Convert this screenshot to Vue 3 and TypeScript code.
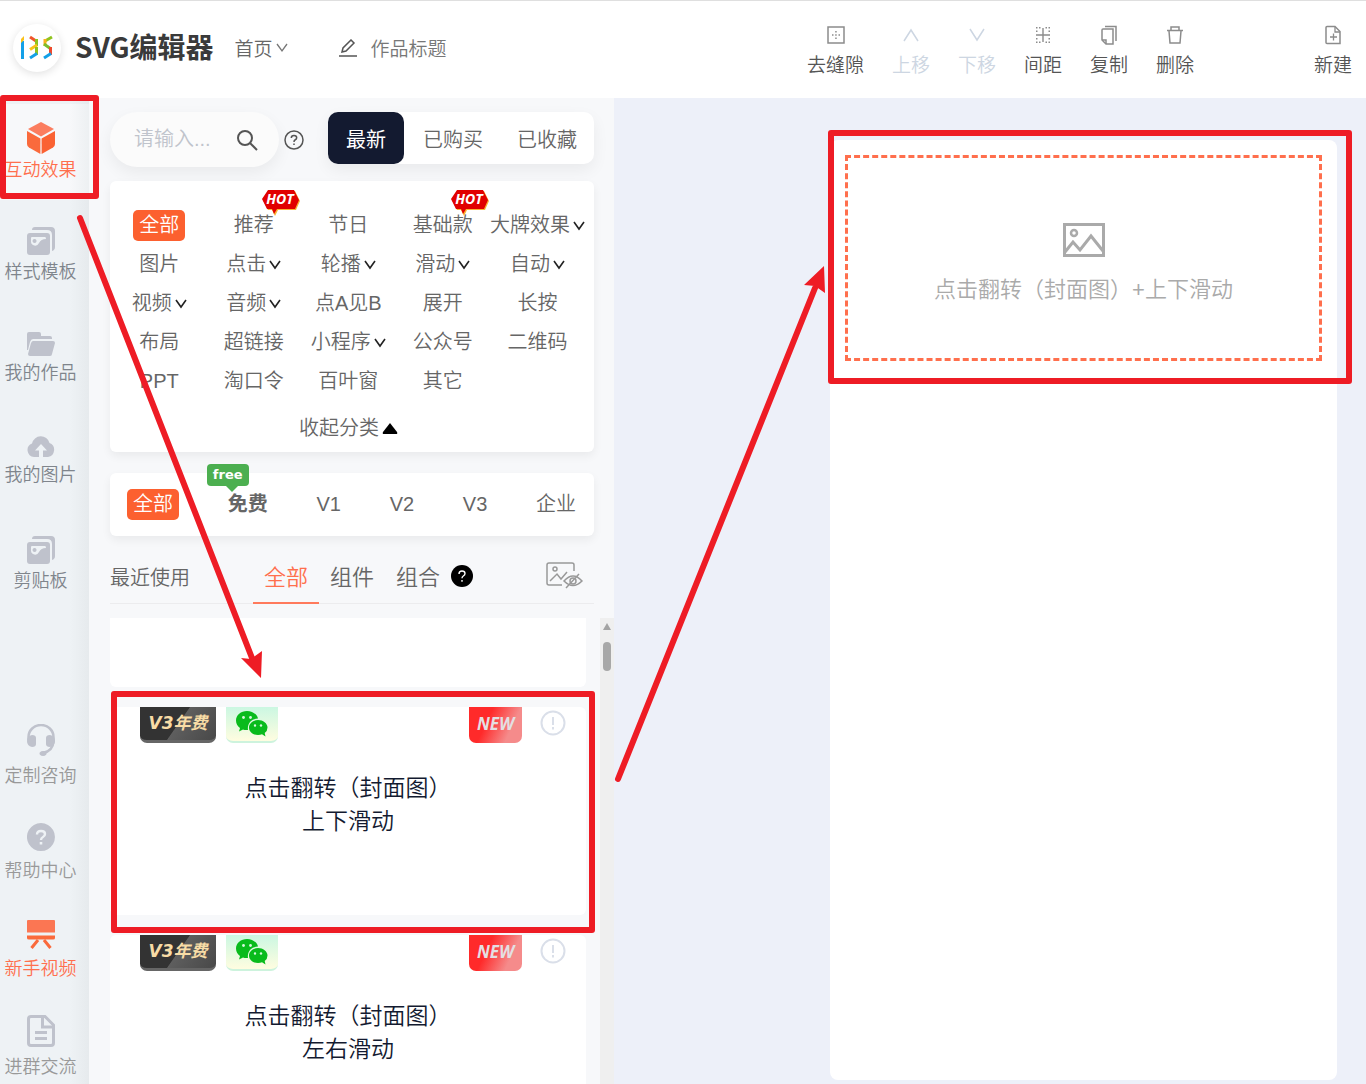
<script setup lang="ts">
import { ref } from 'vue'

interface Shape {
  d: string
  fill?: string
  stroke?: string
  sw?: number
}
interface NavItem {
  label: string
  w: number
  h: number
  shapes: Shape[]
  hot?: boolean
}
interface Tool {
  label: string
  disabled?: boolean
  shapes: Shape[]
}
interface Category {
  label: string
  more?: boolean
  hot?: boolean
}

const GREY = '#bfc2cc'
const BG = '#eef2f5'

const gallery: Shape[] = [
  { d: 'M5 3Q5 0 8 0H24Q28 0 28 4V20Q28 23 25 24V8Q25 3 20 3Z', fill: GREY },
  { d: 'M3 6H20Q23 6 23 9V25Q23 28 20 28H3Q0 28 0 25V9Q0 6 3 6Z', fill: GREY },
  { d: 'M4 11Q4 10 5 10H18Q19 10 19 12Q14 12 12 16Q10 20 6 18Q4 17 4 15Z', fill: BG },
  { d: 'M7.500 12a2 2 0 1 0 0.100 0Z', fill: GREY },
]

const mainNav: NavItem[] = [
  {
    label: '互动效果', w: 28, h: 32, hot: true,
    shapes: [
      { d: 'M14 0 27 7 14 14.500 1 7Z', fill: '#fb7d5f' },
      { d: 'M0 9 13.400 16.500V32L2 25.500Q0 24 0 22Z', fill: '#fa6a3c' },
      { d: 'M28 9 14.600 16.500V32L26 25.500Q28 24 28 22Z', fill: '#fa6233' },
    ],
  },
  { label: '样式模板', w: 28, h: 28, shapes: gallery },
  {
    label: '我的作品', w: 28, h: 24,
    shapes: [
      { d: 'M0 2Q0 0 2 0H12Q14 0 14 2V4H23Q25 4 25 6V7H6Q4 7 3 10L1 18H0Z', fill: GREY },
      { d: 'M6 9H26Q28 9 28 11L25 22Q25 24 23 24H3Q1 24 1 22L4 11Q5 9 6 9Z', fill: GREY },
    ],
  },
  {
    label: '我的图片', w: 28, h: 23,
    shapes: [
      { d: 'M7 22A7 7 0 0 1 5 8.500A9 9 0 0 1 22.500 8A7.300 7.300 0 0 1 21 22Z', fill: GREY },
      { d: 'M14 9 20 15.500H16V23H12V15.500H8Z', fill: BG },
    ],
  },
  { label: '剪贴板', w: 28, h: 28, shapes: gallery },
]

const helpNav: NavItem[] = [
  {
    label: '定制咨询', w: 28, h: 32,
    shapes: [
      { d: 'M1.500 16V13A12.500 12 0 0 1 26.500 13V17Q26 27 16 29', stroke: GREY, sw: 2.5 },
      { d: 'M5 11Q9 11 9 14V20Q9 23 5 23Q0 22 0 17Q0 12 5 11Z', fill: GREY },
      { d: 'M23 11Q19 11 19 14V20Q19 23 23 23Q28 22 28 17Q28 12 23 11Z', fill: GREY },
      { d: 'M16 27a3.500 2.500 0 1 0 0.100 0Z', fill: GREY },
    ],
  },
  {
    label: '帮助中心', w: 28, h: 28,
    shapes: [
      { d: 'M14 0A14 14 0 1 1 13.900 0Z', fill: GREY },
      { d: 'M10 11.500Q10 8 14 8Q18 8 18 11Q18 13 16 14Q14 15 14 17', stroke: BG, sw: 2.4 },
      { d: 'M12.700 19h2.600v2.600h-2.600Z', fill: BG },
    ],
  },
  {
    label: '新手视频', w: 28, h: 29, hot: true,
    shapes: [
      { d: 'M1 0H27Q28 0 28 1V12.500H0V1Q0 0 1 0Z', fill: '#fb7653' },
      { d: 'M0 15.500H28V18Q28 19.500 26 19.500H2Q0 19.500 0 18Z', fill: '#fa6a3c' },
      { d: 'M11 20 4.500 28M17 20 23.500 28', stroke: '#fa6a3c', sw: 3 },
    ],
  },
  {
    label: '进群交流', w: 28, h: 32,
    shapes: [
      { d: 'M4 1.500H18L26.500 10V28Q26.500 30.500 24 30.500H4Q1.500 30.500 1.500 28V4Q1.500 1.500 4 1.500Z', stroke: GREY, sw: 3 },
      { d: 'M15.500 2V12H26', stroke: GREY, sw: 3 },
      { d: 'M8 17.500H20M8 23.500H20', stroke: GREY, sw: 3 },
    ],
  },
]

const INK = '#8c8c8c'
const PALE = '#cdd6e2'
const tools: Tool[] = [
  {
    label: '去缝隙',
    shapes: [
      { d: 'M4 3H20V19H4Z', stroke: INK, sw: 1.5 },
      { d: 'M8 10.200h1.500v1.500h-1.500ZM11.200 10.200h1.500v1.500h-1.500ZM14.500 10.200h1.500v1.500h-1.500ZM11.200 7h1.500v1.500h-1.500ZM11.200 13.500h1.500v1.500h-1.500Z', fill: INK },
    ],
  },
  { label: '上移', disabled: true, shapes: [{ d: 'M4 17 11 6 18 17', stroke: PALE, sw: 1.5 }] },
  { label: '下移', disabled: true, shapes: [{ d: 'M4 5 11 16 18 5', stroke: PALE, sw: 1.5 }] },
  {
    label: '间距',
    shapes: [
      { d: 'M4 11H18M11 4V18', stroke: INK, sw: 1.4 },
      { d: 'M4 3h1.500v1.500h-1.500ZM7 3h1.500v1.500h-1.500ZM13.500 3h1.500v1.500h-1.500ZM16.500 3h1.500v1.500h-1.500ZM4 6.500h1.500v1.500h-1.500ZM16.500 6.500h1.500v1.500h-1.500ZM4 14h1.500v1.500h-1.500ZM16.500 14h1.500v1.500h-1.500ZM4 17.500h1.500v1.500h-1.500ZM7 17.500h1.500v1.500h-1.500ZM13.500 17.500h1.500v1.500h-1.500ZM16.500 17.500h1.500v1.500h-1.500Z', fill: INK },
    ],
  },
  {
    label: '复制',
    shapes: [
      { d: 'M5 5H15V20H8L4 16V6Q4 5 5 5Z', stroke: INK, sw: 1.5 },
      { d: 'M4 16H8V20M7 2.500H18V17', stroke: INK, sw: 1.5 },
    ],
  },
  {
    label: '删除',
    shapes: [
      { d: 'M3 6.500H19M7 6V3H15V6M5 7 6 19H16L17 7', stroke: INK, sw: 1.5 },
    ],
  },
]
const createTool: Tool = {
  label: '新建',
  shapes: [
    { d: 'M5 2.500H13L18 7.500V19.500H5Q4 19.500 4 18.500V3.500Q4 2.500 5 2.500Z', stroke: INK, sw: 1.5 },
    { d: 'M13 3V8H18M8 13H15M11.500 9.500V16.500', stroke: INK, sw: 1.3 },
  ],
}

const ownership = ['最新', '已购买', '已收藏']
const categories: Category[] = [
  { label: '全部' }, { label: '推荐', hot: true }, { label: '节日' }, { label: '基础款', hot: true }, { label: '大牌效果', more: true },
  { label: '图片' }, { label: '点击', more: true }, { label: '轮播', more: true }, { label: '滑动', more: true }, { label: '自动', more: true },
  { label: '视频', more: true }, { label: '音频', more: true }, { label: '点A见B' }, { label: '展开' }, { label: '长按' },
  { label: '布局' }, { label: '超链接' }, { label: '小程序', more: true }, { label: '公众号' }, { label: '二维码' },
  { label: 'PPT' }, { label: '淘口令' }, { label: '百叶窗' }, { label: '其它' },
]
const levels = ['全部', '免费', 'V1', 'V2', 'V3', '企业']
const kinds = ['全部', '组件', '组合']
const effects = [
  ['点击翻转（封面图）', '上下滑动'],
  ['点击翻转（封面图）', '左右滑动'],
]

const owner = ref('最新')
const category = ref('全部')
const level = ref('全部')
const kind = ref('全部')
const title = ref('作品标题')
const keyword = ref('')
</script>

<template>
  <div class="editor">
    <header class="topbar">
      <div class="brand">
        <span class="logo">
          <svg width="34" height="26" viewBox="0 0 34 26" fill="none" stroke-width="3" aria-hidden="true">
            <path d="M2.500 6V24" stroke="#13a0e8" />
            <path d="M1 4 4 1V5L1 8Z" fill="#fbc21a" />
            <path d="M10 2 16 6" stroke="#f0562b" />
            <path d="M16.500 4V11" stroke="#8fc31f" />
            <path d="M17 10 10 14.500" stroke="#fbc21a" />
            <path d="M16.500 12V20" stroke="#8fc31f" />
            <path d="M17 18.500 10 23" stroke="#13a0e8" />
            <path d="M32 2 25 6" stroke="#8fc31f" />
            <path d="M25 4V11" stroke="#fbb01a" />
            <path d="M24 9 31 14" stroke="#7dbb2c" />
            <path d="M30.500 12V20" stroke="#ee4a2e" />
            <path d="M31 18.500 24 23" stroke="#13a0e8" />
          </svg>
        </span>
        <h1>SVG编辑器</h1>
      </div>
      <button class="home" type="button">
        首页
        <svg width="12" height="10" viewBox="0 0 12 10" fill="none" stroke="#777" stroke-width="1.300"><path d="M1 1 6 8 11 1" /></svg>
      </button>
      <label class="title">
        <svg width="18" height="18" viewBox="0 0 18 18" fill="none" stroke="#555" stroke-width="1.500">
          <path d="M0 17H18M3 13 4 9 12 1 15 4 7 12Z" />
        </svg>
        <input v-model="title" type="text" aria-label="作品标题" />
      </label>
      <nav class="tools">
        <button v-for="t in tools" :key="t.label" type="button" :disabled="t.disabled">
          <svg width="22" height="22" viewBox="0 0 22 22">
            <path v-for="(s, i) in t.shapes" :key="i" :d="s.d" :fill="s.fill ?? 'none'" :stroke="s.stroke" :stroke-width="s.sw" />
          </svg>
          {{ t.label }}
        </button>
        <button class="create" type="button">
          <svg width="22" height="22" viewBox="0 0 22 22">
            <path v-for="(s, i) in createTool.shapes" :key="i" :d="s.d" :fill="s.fill ?? 'none'" :stroke="s.stroke" :stroke-width="s.sw" />
          </svg>
          {{ createTool.label }}
        </button>
      </nav>
    </header>

    <div class="body">
      <aside class="side">
        <nav v-for="(group, g) in [mainNav, helpNav]" :key="g" class="side-group">
          <a v-for="(n, k) in group" :key="n.label" href="#" :class="{ hot: n.hot, current: g === 0 && k === 0 }">
            <svg :width="n.w" :height="n.h" :viewBox="`0 0 ${n.w} ${n.h}`">
              <path v-for="(s, i) in n.shapes" :key="i" :d="s.d" :fill="s.fill ?? 'none'" :stroke="s.stroke" :stroke-width="s.sw" />
            </svg>
            <span>{{ n.label }}</span>
          </a>
        </nav>
      </aside>

      <section class="panel">
        <div class="filters">
          <label class="search">
            <input v-model="keyword" type="text" placeholder="请输入..." aria-label="搜索" />
            <svg width="22" height="22" viewBox="0 0 22 22" fill="none" stroke="#555" stroke-width="2">
              <circle cx="9" cy="9" r="7" /><path d="M14 14 21 21" />
            </svg>
          </label>
          <svg class="hint" width="20" height="20" viewBox="0 0 20 20" fill="none" stroke="#555" stroke-width="1.500">
            <circle cx="10" cy="10" r="9" />
            <path d="M7.300 8Q7.300 5.500 10 5.500Q12.700 5.500 12.700 7.800Q12.700 9.200 11 10Q10 10.600 10 12M10 13.500V15" />
          </svg>
          <div class="segments">
            <button v-for="o in ownership" :key="o" type="button" :class="{ on: owner === o }" @click="owner = o">{{ o }}</button>
          </div>
        </div>

        <div class="card categories">
          <ul>
            <li v-for="c in categories" :key="c.label">
              <button type="button" :class="{ pill: category === c.label }" @click="category = c.label">
                {{ c.label }}
                <svg v-if="c.more" width="12" height="10" viewBox="0 0 12 10" fill="none" stroke="#222" stroke-width="1.600"><path d="M1 1 6 8 11 1" /></svg>
              </button>
              <svg v-if="c.hot" class="hot-badge" width="38" height="27" viewBox="0 0 38 27">
                <path d="M6 2H33L38 12 34 21H16L13 27 10 21H6L1 11Z" fill="#f9b233" />
                <path d="M6 1H32L37 11 33 20H15L12 25 10 20H5L0 10Z" fill="#e10000" />
                <text x="18" y="15" text-anchor="middle">HOT</text>
              </svg>
            </li>
          </ul>
          <button class="fold" type="button">
            收起分类
            <svg width="16" height="11" viewBox="0 0 16 11"><path d="M8 0 15 9Q16 11 14 11H2Q0 11 1 9Z" fill="#000" /></svg>
          </button>
        </div>

        <div class="card levels">
          <button v-for="l in levels" :key="l" type="button" :class="{ pill: level === l, free: l === '免费' }" @click="level = l">
            {{ l }}
            <span v-if="l === '免费'" class="free-badge">free</span>
          </button>
        </div>

        <div class="kinds">
          <a class="recent" href="#">最近使用</a>
          <button v-for="k in kinds" :key="k" type="button" :class="{ on: kind === k }" @click="kind = k">{{ k }}</button>
          <svg width="22" height="22" viewBox="0 0 22 22">
            <circle cx="11" cy="11" r="11" />
            <path d="M8 9Q8 6 11 6Q14 6 14 8.500Q14 10 12.300 11Q11 11.800 11 13.300M11 15V16.800" fill="none" stroke="#fff" stroke-width="1.400" />
          </svg>
          <svg class="preview" width="37" height="28" viewBox="0 0 37 28" fill="none" stroke="#999" stroke-width="1.500">
            <path d="M16 23H3Q1 23 1 21V3Q1 1 3 1H26Q28 1 28 3V9M4 19 11 12 15 17 21 10" />
            <circle cx="9" cy="7" r="2" />
            <path d="M18 19Q27 9 36 19Q27 28 18 19ZM33 12 20 26" />
            <circle cx="27" cy="19" r="3" />
          </svg>
        </div>

        <div class="scroller">
          <div class="list">
            <article class="effect rest"></article>
            <article v-for="(e, i) in effects" :key="i" class="effect">
              <div class="badges">
                <span class="year">V3年费</span>
                <span class="wechat">
                  <svg width="32" height="26" viewBox="0 0 32 26">
                    <path d="M11 0C5 0 0 4 0 9.500C0 12.500 1.500 15 4 17L3 20.500 7 18.500Q9 19.300 12 19C11 12 16 7.500 22 7.500C21 3 16 0 11 0Z" fill="#09bb1c" />
                    <path d="M22 9C17 9 13 12.500 13 16.500C13 21 17 24 22 24Q24.500 24 26 23.300L29.500 25.500 28.700 22Q31.500 20 31.500 16.500C31.500 12.500 27 9 22 9Z" fill="#09bb1c" />
                    <g fill="#d8f8df"><circle cx="7.500" cy="6.500" r="1.400" /><circle cx="14.500" cy="6.500" r="1.400" /><circle cx="19" cy="14.500" r="1.200" /><circle cx="25" cy="14.500" r="1.200" /></g>
                  </svg>
                </span>
                <span class="new">NEW</span>
                <svg class="info" width="26" height="26" viewBox="0 0 26 26" fill="none" stroke="#dadfe9" stroke-width="2">
                  <circle cx="13" cy="13" r="11.500" /><path d="M13 7V15M13 17V19.500" />
                </svg>
              </div>
              <p v-for="line in e" :key="line">{{ line }}</p>
            </article>
          </div>
          <div class="track">
            <svg width="8" height="7" viewBox="0 0 8 7"><path d="M4 0 8 7H0Z" fill="#a3a3a3" /></svg>
            <span class="thumb"></span>
          </div>
        </div>
      </section>

      <main class="canvas">
        <div class="page">
          <div class="slot">
            <svg width="42" height="34" viewBox="0 0 42 34" fill="none" stroke="#aaa" stroke-width="3">
              <path d="M1.500 1.500H40.500V32.500H1.500Z" />
              <circle cx="11" cy="10" r="3" stroke-width="2.500" />
              <path d="M2 29 10 19 17 27 28 13 40 28" />
            </svg>
            <p>点击翻转（封面图）+上下滑动</p>
          </div>
        </div>
      </main>
    </div>

    <svg class="marks" width="1366" height="1084" viewBox="0 0 1366 1084" fill="none" stroke="#ee1c25" stroke-width="6" stroke-linejoin="round" stroke-linecap="round" aria-hidden="true">
      <rect x="3" y="98" width="93" height="98" />
      <rect x="114" y="694" width="478" height="236" />
      <rect x="831" y="133" width="518" height="248" />
      <path d="M80 218 252 658M618 779 815 288" />
      <path d="M261 678 241 658 251 659 262 651ZM824 266 804 285 815 286 825 293Z" stroke="none" fill="#ee1c25" />
    </svg>
  </div>
</template>

<style>
body {
  margin: 0;
}
</style>

<style scoped>
.editor {
  position: relative;
  display: flex;
  flex-direction: column;
  height: 100vh;
  overflow: hidden;
  font-family: 'Liberation Sans', 'Noto Sans CJK SC', sans-serif;
  font-weight: 350;
  font-size: 20px;
  color: #666;
  background: #edf0f9;
}
svg {
  display: block;
  flex: none;
}
button,
input {
  font: inherit;
  color: inherit;
  padding: 0;
  border: 0;
  background: none;
}
button {
  white-space: nowrap;
}
a {
  color: inherit;
  text-decoration: none;
}
p,
h1,
ul {
  margin: 0;
  padding: 0;
  list-style: none;
}

.topbar {
  box-sizing: border-box;
  flex: none;
  display: flex;
  align-items: center;
  height: 98px;
  padding: 0 14px 4px 13px;
  border-top: 1px solid #dfdfdf;
  background: #fff;
  font-size: 19px;
}
.brand {
  display: flex;
  align-items: center;
  gap: 14px;
}
.logo {
  display: flex;
  align-items: center;
  justify-content: center;
  width: 48px;
  height: 48px;
  border-radius: 50%;
  box-shadow: 0 2px 8px rgba(0, 0, 0, 0.12);
}
h1 {
  padding-bottom: 4px;
  font: 700 28px/40px 'Noto Sans CJK SC', sans-serif;
  color: #3a3a3a;
}
.home {
  display: flex;
  align-items: center;
  gap: 3px;
  margin-left: 21px;
}
.title {
  display: flex;
  align-items: center;
  gap: 14px;
  margin-left: 51px;
}
.title input {
  width: 160px;
  color: #777;
}
.tools {
  display: flex;
  gap: 28px;
  margin-left: auto;
  padding-top: 8px;
}
.tools button {
  display: flex;
  flex-direction: column;
  align-items: center;
  gap: 6px;
  line-height: 28px;
  color: #555;
}
.tools button:disabled {
  color: #cdd6e2;
}
.tools .create {
  margin-left: 92px;
}

.body {
  flex: 1;
  display: flex;
  min-height: 0;
}
.side {
  box-sizing: border-box;
  flex: none;
  width: 89px;
  padding-top: 6px;
  overflow: hidden;
  background: linear-gradient(90deg, #eef2f5 70px, #e6eaed);
}
.side-group {
  display: flex;
  flex-direction: column;
  gap: 7px;
}
.side-group + .side-group {
  gap: 1px;
  margin-top: 96px;
}
.side-group a {
  display: flex;
  flex-direction: column;
  align-items: center;
  justify-content: center;
  gap: 5px;
  height: 96px;
  padding-right: 8px;
  font-size: 18px;
  line-height: 24px;
  color: #7f858c;
}
.side-group + .side-group a {
  gap: 8px;
  color: #999;
}
.side-group a.current {
  gap: 4px;
  background: linear-gradient(90deg, #f7f8fa 70px, #edf0f2);
}
.side-group a.hot {
  color: #ff6f4d;
}

.panel {
  box-sizing: border-box;
  flex: none;
  display: flex;
  flex-direction: column;
  width: 525px;
  padding: 14px 0 0 21px;
  background: #f7f8fa;
}
.filters,
.card,
.kinds {
  margin-right: 20px;
}
.filters {
  display: flex;
  align-items: flex-start;
}
.search {
  display: flex;
  align-items: center;
  gap: 20px;
  height: 55px;
  padding: 0 21px 0 24px;
  border-radius: 28px;
  background: #fbfbfb;
  box-shadow: 0 6px 16px rgba(0, 0, 0, 0.06);
}
.search input {
  width: 82px;
  outline: none;
}
.search input::placeholder {
  color: #c0c4cc;
  opacity: 1;
}
.hint {
  margin: 18px 0 0 5px;
}
.segments {
  display: flex;
  margin-left: auto;
  height: 52px;
  border-radius: 10px;
  background: #fff;
  box-shadow: 0 6px 16px rgba(0, 0, 0, 0.06);
}
.segments button {
  padding: 0 17px;
}
.segments .on {
  margin-right: 2px;
  padding: 0 18px;
  border-radius: 10px;
  color: #fff;
  font-weight: 400;
  background: #131a30;
}

.card {
  border-radius: 6px;
  background: #fff;
  box-shadow: 0 4px 10px rgba(0, 0, 0, 0.06);
}
.categories {
  margin-top: 14px;
  padding: 25px 9px 8px 2px;
}
.categories ul {
  display: grid;
  grid-template-columns: repeat(5, 1fr);
  grid-auto-rows: 39px;
}
.categories li {
  position: relative;
  display: flex;
  align-items: center;
  justify-content: center;
}
.categories button {
  display: flex;
  align-items: center;
  gap: 3px;
  line-height: 31px;
}
.card .pill {
  padding: 0 6px;
  border-radius: 5px;
  color: #fff;
  background: #fc602f;
}
.hot-badge {
  position: absolute;
  top: -17px;
  left: calc(50% + 8px);
}
.hot-badge text {
  font: italic 700 14px 'Open Sans', sans-serif;
  fill: #fff;
}
.categories .fold {
  margin: 12px auto 0;
}

.levels {
  display: flex;
  align-items: center;
  justify-content: space-between;
  height: 63px;
  margin-top: 21px;
  padding: 0 18px 0 17px;
}
.levels button {
  line-height: 31px;
}
.levels .free {
  position: relative;
  font-weight: 700;
}
.free-badge {
  position: absolute;
  top: -25px;
  left: -21px;
  width: 42px;
  border-radius: 4px;
  font: 700 13px/22px 'DejaVu Sans', sans-serif;
  color: #fff;
  background: #4caf50;
}
.free-badge::after {
  content: '';
  position: absolute;
  top: 22px;
  left: 19px;
  border: 6px solid transparent;
  border-top-color: #4caf50;
  border-bottom: 0;
}

.kinds {
  display: flex;
  align-items: center;
  height: 54px;
  margin-top: 13px;
  border-bottom: 1px solid #ececee;
}
.kinds .recent {
  margin-right: 63px;
}
.kinds button {
  box-sizing: border-box;
  height: 55px;
  padding: 0 11px;
  font-size: 22px;
  border-bottom: 2px solid transparent;
}
.kinds .on {
  color: #ff6f4d;
  border-color: #ff7a5c;
}
.kinds .preview {
  margin: 0 11px 0 auto;
}

.scroller {
  flex: 1;
  display: flex;
  justify-content: space-between;
  min-height: 0;
  margin-top: 14px;
}
.list {
  flex: 1;
  display: flex;
  flex-direction: column;
  gap: 20px;
  margin-right: 14px;
  overflow: hidden;
}
.effect {
  flex: none;
  height: 208px;
  border-radius: 6px;
  background: #fff;
  text-align: center;
  font-size: 23px;
  line-height: 33px;
  color: #131a30;
}
.rest {
  height: 69px;
  border-radius: 0 0 6px 6px;
}
.badges {
  display: flex;
  margin-bottom: 29px;
  padding: 0 20px 0 30px;
}
.badges span {
  box-sizing: border-box;
  height: 36px;
  border-radius: 0 0 7px 7px;
}
.year {
  width: 76px;
  border-bottom: 3px solid #666;
  font: italic 700 17px/32px 'DejaVu Sans', 'Noto Sans CJK SC', sans-serif;
  color: #f8dca6;
  background: linear-gradient(125deg, #333 50%, #5e5e5e 51%, #484848);
}
.wechat {
  display: flex;
  align-items: center;
  justify-content: center;
  width: 52px;
  margin-left: 10px;
  border-bottom: 2px solid #cdf3dd;
  background: linear-gradient(#cbf7e2, #fffde0);
}
.new {
  width: 53px;
  margin-left: auto;
  font: italic 700 17px/34px 'Open Sans', sans-serif;
  color: #e4dfe2;
  background: linear-gradient(115deg, #ff2a2a 35%, #f58b8b 75%);
}
.info {
  margin: 3px 0 0 18px;
}
.track {
  display: flex;
  flex-direction: column;
  align-items: center;
  gap: 12px;
  width: 14px;
  padding-top: 5px;
  background: #efefef;
}
.thumb {
  width: 8px;
  height: 29px;
  border-radius: 4px;
  background: #a8a8a8;
}

.canvas {
  box-sizing: border-box;
  flex: 1;
  display: flex;
  padding: 42px 29px 4px 216px;
}
.page {
  box-sizing: border-box;
  flex: 1;
  padding: 15px;
  border-radius: 8px;
  background: #fff;
}
.slot {
  box-sizing: border-box;
  display: flex;
  flex-direction: column;
  align-items: center;
  justify-content: center;
  gap: 17px;
  height: 206px;
  padding-top: 12px;
  border: 3px dashed #ff6f4d;
  font-size: 22px;
  line-height: 32px;
  color: #aaa;
}

.marks {
  position: absolute;
  top: 0;
  left: 0;
  pointer-events: none;
}
</style>
